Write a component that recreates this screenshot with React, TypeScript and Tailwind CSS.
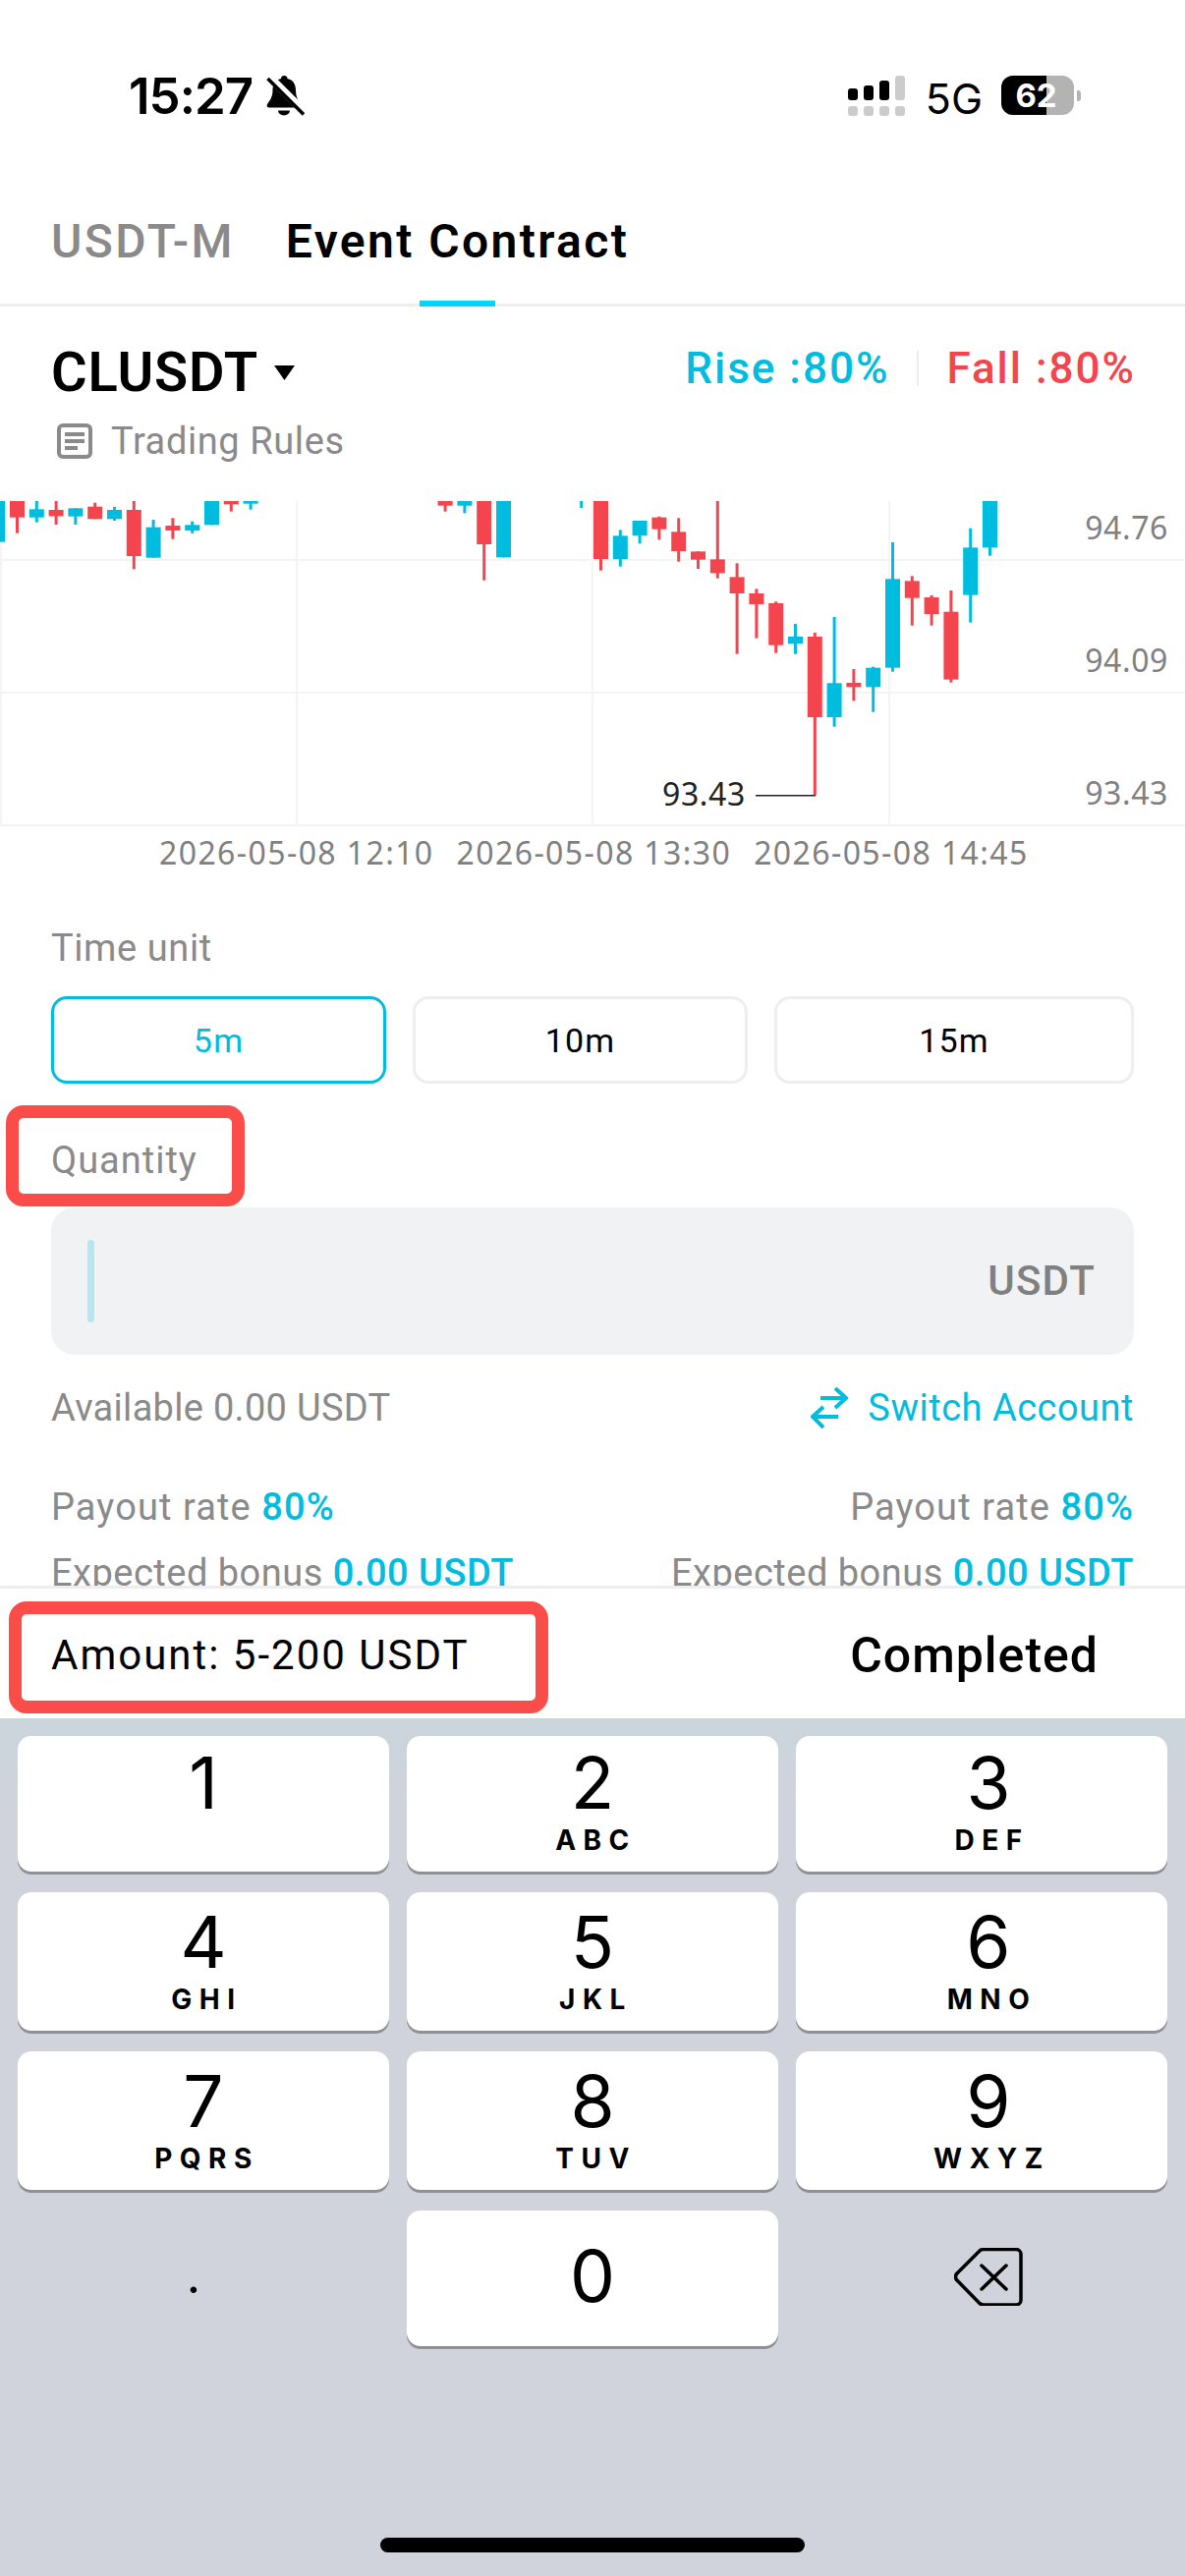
import React from "react";

const CY = "#00bcde";
const RD = "#f4454e";
type C = [number, "c" | "r", number, number, number, number];
// index, colour, wick top, body top, body bottom, wick bottom (in crop units)
const candles: C[] = [
  [-1, "c", 30, 30, 155, 155],
  [0, "r", 30, 30, 80, 128],
  [1, "c", 30, 55, 80, 95],
  [2, "r", 30, 57, 76, 102],
  [3, "c", 52, 52, 77, 102],
  [4, "r", 35, 47, 85, 85],
  [5, "c", 48, 57, 85, 90],
  [6, "r", 30, 57, 198, 238],
  [7, "c", 87, 110, 203, 203],
  [8, "r", 82, 105, 120, 146],
  [9, "c", 92, 103, 120, 128],
  [10, "c", 30, 30, 103, 103],
  [11, "r", 30, 30, 40, 62],
  [12, "c", 30, 30, 38, 56],
  [22, "r", 30, 30, 44, 62],
  [23, "c", 30, 30, 44, 67],
  [24, "r", 30, 30, 162, 272],
  [25, "c", 30, 30, 202, 202],
  [30, "r", 30, 30, 207, 242],
  [31, "c", 118, 136, 207, 230],
  [32, "c", 90, 90, 135, 160],
  [33, "r", 77, 80, 116, 148],
  [34, "r", 82, 124, 183, 215],
  [35, "r", 184, 184, 209, 237],
  [36, "r", 30, 208, 250, 266],
  [37, "r", 220, 262, 312, 497],
  [38, "r", 298, 312, 345, 449],
  [39, "r", 337, 342, 470, 494],
  [40, "c", 405, 444, 465, 497],
  [41, "r", 432, 444, 690, 928],
  [42, "c", 384, 586, 690, 719],
  [43, "r", 543, 585, 598, 640],
  [44, "c", 536, 539, 598, 674],
  [45, "c", 156, 268, 539, 551],
  [46, "r", 259, 274, 326, 410],
  [47, "r", 318, 324, 375, 410],
  [48, "r", 303, 368, 575, 584],
  [49, "c", 113, 172, 317, 401],
  [50, "c", 30, 30, 172, 197],
];

function Chart() {
  const y = (z: number) => z / 3 - 10;
  return (
    <svg width="1206" height="331" viewBox="0 0 1206 331" className="block">
      {[59, 194, 329].map((v) => (
        <rect key={v} x="0" y={v} width="1206" height="2" fill="#f4f4f5" />
      ))}
      {[0, 301, 602, 904].map((v) => (
        <rect key={v} x={v} y="0" width="2" height="331" fill="#f4f4f5" />
      ))}
      {candles.map(([i, c, wt, bt, bb, wb]) => {
        const cx = 17.5 + 19.8 * i;
        const f = c === "c" ? CY : RD;
        return (
          <g key={i} fill={f}>
            <rect x={cx - 1.5} y={y(wt)} width="3" height={y(wb) - y(wt)} />
            <rect x={cx - 7.5} y={y(bt)} width="15" height={y(bb) - y(bt)} />
          </g>
        );
      })}
      <rect x="590.2" y="0" width="3" height="7" fill={CY} />
      <rect x="769" y="299" width="61" height="1.5" fill="#222222" />
    </svg>
  );
}

function Bell() {
  return (
    <svg width="40" height="41" viewBox="0 0 40 41" className="block">
      <path d="M18 0c-1.7 0-3 1.2-3 3C9 4.400 6.500 9 6.500 15c0 6-2.500 10-5.500 14-1 2 0 3.500 2 3.500h30c2 0 3-1.500 2-3.500-3-4-5-8-5-14 0-6-2.500-10.600-8.500-12 0-1.800-1.300-3-3-3z" fill="#000" />
      <path d="M12 35.500a6 5 0 0 0 12 0z" fill="#000" />
      <path d="M1 -1L40 38" stroke="#fff" strokeWidth="8" />
      <path d="M1.500 3L38 39.500" stroke="#000" strokeWidth="3.500" />
    </svg>
  );
}

function Signal() {
  return (
    <div className="flex flex-col gap-[6px]">
      <div className="flex items-end gap-[6px] h-[25px]">
        <div className="w-[10px] h-[12px] rounded-[3px] bg-black" />
        <div className="w-[10px] h-[15px] rounded-[3px] bg-black" />
        <div className="w-[10px] h-[20px] rounded-[3px] bg-black" />
        <div className="w-[10px] h-[25px] rounded-[3px] bg-[#cccccc]" />
      </div>
      <div className="flex gap-[6px]">
        <div className="w-[10px] h-[10px] rounded-[3px] bg-[#cccccc]" />
        <div className="w-[10px] h-[10px] rounded-[3px] bg-[#cccccc]" />
        <div className="w-[10px] h-[10px] rounded-[3px] bg-[#cccccc]" />
        <div className="w-[10px] h-[10px] rounded-[3px] bg-[#cccccc]" />
      </div>
    </div>
  );
}

function Key({ d, l, pt, right }: { d: string; l?: string; pt: string; right?: boolean }) {
  return (
    <div className={`bg-white rounded-[14px] shadow-[0_3px_0_#8e9095] flex flex-col items-center ${pt} ${right ? "pl-[14px]" : ""}`}>
      <div className="font-[Inter,sans-serif] text-[73px] leading-[73px] text-black">{d}</div>
      {l && <div className="font-[Inter,sans-serif] mt-[8px] text-[28px] leading-[28px] font-bold tracking-[7.5px] pl-[7px] text-black">{l}</div>}
    </div>
  );
}

function TimeBtn({ t, w, active }: { t: string; w: string; active?: boolean }) {
  return (
    <div className={`${w} h-[89px] rounded-[16px] border-[3px] flex items-center justify-center text-[34px] tracking-[1.2px] ${active ? "border-[#00bcde] text-[#00bcde]" : "border-[#eeeeee] text-black"}`}>
      {t}
    </div>
  );
}

export default function App() {
  return (
    <div className="relative w-[1206px] h-[2622px] overflow-hidden bg-white flex flex-col font-[Roboto,sans-serif]">
      {/* status bar */}
      <div className="h-[130px] shrink-0 flex items-start pt-[77px] pl-[131px] pr-[106px] font-[Inter,sans-serif] text-black">
        <div className="text-[51px] leading-[42px] font-semibold tracking-[-1px]">15:27</div>
        <div className="ml-[14px]"><Bell /></div>
        <div className="ml-auto"><Signal /></div>
        <div className="ml-[21px] text-[43px] leading-[40px] mt-[3px]">5G</div>
        <div className="ml-[19px] relative w-[74px] h-[40px] rounded-[12px] overflow-hidden flex bg-[#b3b3b3]">
          <div className="w-[46px] h-full bg-black" />
          <div className="absolute inset-0 flex items-center justify-center text-white font-bold text-[33px] leading-[40px] pr-[3px]">62</div>
        </div>
        <div className="ml-[3px] mt-[15px] w-[4px] h-[11px] rounded-r-[3px] bg-[#b3b3b3]" />
      </div>

      {/* tabs */}
      <div className="relative h-[182px] shrink-0 border-b-[3px] border-[#eeeeee] flex items-start pt-[91px] pl-[52px] text-[48px] leading-[50px] tracking-[2.4px]">
        <div className="text-[#8a8a8a] font-medium">USDT-M</div>
        <div className="ml-[52px] text-black font-semibold">Event Contract</div>
        <div className="absolute left-[427px] bottom-[-3px] w-[77px] h-[6px] bg-[#00d4f7]" />
      </div>

      {/* header */}
      <div className="h-[198px] shrink-0 px-[52px] pt-[39px] flex flex-col">
        <div className="flex items-center h-[56px]">
          <div className="text-[56px] leading-[56px] font-semibold text-black tracking-[0.8px]">CLUSDT</div>
          <svg width="21" height="15" viewBox="0 0 21 15" className="ml-[16px]"><path d="M0 0h21L10.500 15z" fill="#000" /></svg>
          <div className="ml-auto flex items-center -mt-[9px] text-[44px] leading-[48px] font-medium tracking-[2px]">
            <span className="text-[#00bcde]">Rise :80%</span>
            <div className="mx-[28px] w-[2px] h-[36px] bg-[#eeeeee]" />
            <span className="text-[#f4454e] mr-[-2px]">Fall :80%</span>
          </div>
        </div>
        <div className="flex items-center mt-[22px] h-[40px] text-[38px] text-[#8a8a8a] tracking-[0.6px]">
          <svg width="38" height="38" viewBox="0 0 38 38" className="ml-[5px]" fill="none" stroke="#8a8a8a" strokeWidth="4">
            <rect x="3" y="3" width="32" height="32" rx="4" />
            <path d="M9 12h20M9 19h20M9 26h13" />
          </svg>
          <span className="ml-[18px]">Trading Rules</span>
        </div>
      </div>

      {/* chart */}
      <div className="relative h-[331px] shrink-0 font-['Noto_Sans',sans-serif] text-[32px] leading-[32px] tracking-[0.6px]">
        <Chart />
        <span className="absolute right-[17px] top-[11px] text-[#808080]">94.76</span>
        <span className="absolute right-[17px] top-[146px] text-[#808080]">94.09</span>
        <span className="absolute right-[17px] top-[281px] text-[#808080]">93.43</span>
        <span className="absolute left-[674px] top-[282px] text-[#222222]">93.43</span>
      </div>

      {/* dates */}
      <div className="h-[54px] shrink-0 pl-[162px] flex items-start pt-[11px] gap-[23px] font-['Noto_Sans',sans-serif] text-[32px] leading-[32px] tracking-[1.4px] text-[#808080]">
        <span>2026-05-08 12:10</span>
        <span>2026-05-08 13:30</span>
        <span>2026-05-08 14:45</span>
      </div>

      {/* form */}
      <div className="h-[719px] shrink-0 overflow-hidden px-[52px] pt-[46px] flex flex-col text-[38px] leading-[48px] tracking-[0.6px]">
        <div className="text-[#8a8a8a]">Time unit</div>
        <div className="mt-[25px] flex gap-[27px]">
          <TimeBtn t="5m" w="w-[341px]" active />
          <TimeBtn t="10m" w="w-[341px]" />
          <TimeBtn t="15m" w="w-[366px]" />
        </div>
        <div className="mt-[54px] text-[#8a8a8a] tracking-[1px]">Quantity</div>
        <div className="mt-[24px] h-[150px] shrink-0 rounded-[24px] bg-[#f1f2f4] flex items-center pl-[37px] pr-[39px]">
          <div className="w-[7px] h-[84px] rounded-full bg-[#b5e6f0]" />
          <div className="ml-auto text-[42px] font-medium text-[#808080] tracking-[1.2px]">USDT</div>
        </div>
        <div className="mt-[30px] flex items-center justify-between">
          <span className="text-[#8a8a8a] tracking-[0.3px]">Available 0.00 USDT</span>
          <span className="flex items-center text-[#00bcde] tracking-[0.5px]">
            <svg width="38" height="42" viewBox="0 0 38 42" fill="none" stroke="#00bcde" strokeWidth="4" className="mr-[20px]">
              <path d="M10 11h26M25 1l11 10-11 10M28 30H2M13 20L2 30l11 11" />
            </svg>
            Switch Account
          </span>
        </div>
        <div className="mt-[53px] flex justify-between text-[#8a8a8a] tracking-[1.1px]">
          <span>Payout rate <span className="text-[#00bcde] font-medium">80%</span></span>
          <span>Payout rate <span className="text-[#00bcde] font-medium">80%</span></span>
        </div>
        <div className="mt-[19px] flex justify-between text-[#8a8a8a] tracking-[0.5px]">
          <span>Expected bonus <span className="text-[#00bcde] font-medium">0.00 USDT</span></span>
          <span>Expected bonus <span className="text-[#00bcde] font-medium">0.00 USDT</span></span>
        </div>
      </div>

      {/* toolbar */}
      <div className="h-[135px] shrink-0 border-t-[3px] border-[#eeeeee] flex items-center pl-[52px] pr-[88px] pt-[4px]">
        <div className="text-[42px] leading-[48px] text-black tracking-[2px]">Amount: 5-200 USDT</div>
        <div className="ml-auto text-[50px] leading-[56px] font-medium text-black tracking-[1px]">Completed</div>
      </div>

      {/* keyboard */}
      <div className="relative flex-1 bg-linear-to-b from-[#cbd5db] to-[#d0d3db] to-[10%] px-[18px] pt-[18px]">
        <div className="grid grid-cols-3 grid-rows-[138px_141px_141px_138px] gap-x-[18px] gap-y-[21px]">
          <Key d="1" pt="pt-[11px]" />
          <Key d="2" l="ABC" pt="pt-[11px]" />
          <Key d="3" l="DEF" pt="pt-[11px]" right />
          <Key d="4" l="GHI" pt="pt-[14px]" />
          <Key d="5" l="JKL" pt="pt-[14px]" />
          <Key d="6" l="MNO" pt="pt-[14px]" right />
          <Key d="7" l="PQRS" pt="pt-[14px]" />
          <Key d="8" l="TUV" pt="pt-[14px]" />
          <Key d="9" l="WXYZ" pt="pt-[14px]" right />
          <div className="flex justify-center pr-[20px] pt-[30px] font-[Inter,sans-serif] text-[50px] leading-[73px] text-black">.</div>
          <Key d="0" pt="pt-[30px]" />
          <div className="flex items-center justify-center">
            <svg width="71" height="59" viewBox="0 0 71 59" fill="none" stroke="#000" strokeWidth="3.500" strokeLinecap="round" strokeLinejoin="round" className="mb-[3px] ml-[14px]">
              <path d="M30 1.500H63a5 5 0 0 1 5 5V53a5 5 0 0 1-5 5H30a6 6 0 0 1-4.500-2L3.500 33.500a5 5 0 0 1 0-8L25.500 3.500a6 6 0 0 1 4.500-2z" />
              <path d="M28 18l25 24M53 18L28 42" />
            </svg>
          </div>
        </div>
        <div className="absolute left-[387px] top-[834px] w-[432px] h-[15px] rounded-full bg-black" />
      </div>

      {/* annotations */}
      <div className="absolute left-[6px] top-[1125px] w-[243px] h-[103px] rounded-[18px] border-[13px] border-[#fa4d4a]" />
      <div className="absolute left-[9px] top-[1630px] w-[549px] h-[114px] rounded-[18px] border-[13px] border-[#fa4d4a]" />
    </div>
  );
}
